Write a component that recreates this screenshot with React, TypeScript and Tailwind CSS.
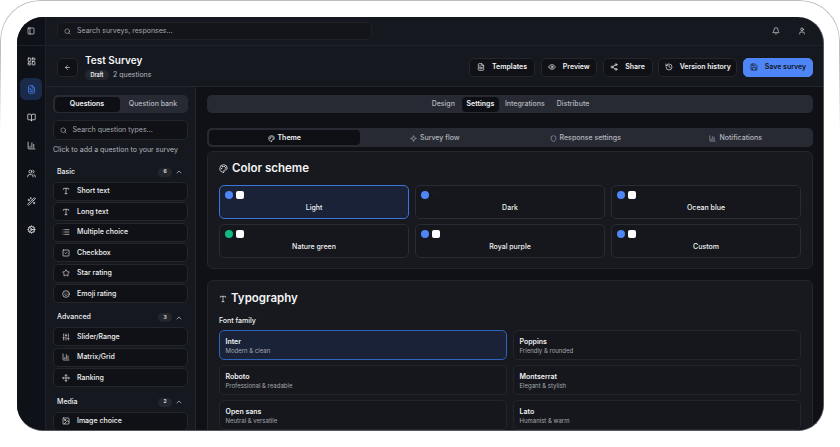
import React from "react";
import {
  PanelLeft, LayoutDashboard, FileText, BookOpen, BarChart3, Users, WandSparkles, Cog, Search, Bell, User,
  ArrowLeft, Eye, Share2, History, Save, Palette, Sparkle, Shield, Type, List, SquareCheck, Star, Smile,
  SlidersVertical, Move, Image, ChevronUp,
} from "lucide-react";

type IconT = React.ComponentType<{ className?: string; strokeWidth?: number }>;

function Item({ icon: I, label }: { icon: IconT; label: string }) {
  return (
    <div className="flex h-[19px] items-center rounded-[5px] border border-[#24262d] bg-[#101116] pl-[8px]">
      <I className="h-[8px] w-[8px] shrink-0 text-[#e5e7eb]" strokeWidth={2} />
      <span className="ml-[7px] pt-[1px] text-[7px] font-medium text-[#f1f2f4]">{label}</span>
    </div>
  );
}

function Group({ name, count, items, mt }: { name: string; count: number; items: [IconT, string][]; mt: string }) {
  return (
    <div className={mt}>
      <div className="flex h-[14px] items-center pl-[4px] pr-[5px]">
        <span className="flex-1 text-[7px] font-medium text-[#eceef1]">{name}</span>
        <span className="flex h-[9px] w-[14px] items-center justify-center rounded-full bg-[#24262d] text-[5px] font-semibold text-[#e5e7eb]">{count}</span>
        <ChevronUp className="ml-[3px] h-[8px] w-[8px] text-[#d1d5db]" strokeWidth={2} />
      </div>
      <div className="mt-[2.5px] flex flex-col gap-[1.5px]">
        {items.map(([i, l]) => <Item key={l} icon={i} label={l} />)}
      </div>
    </div>
  );
}

function HeaderBtn({ icon: I, label, w, primary }: { icon: IconT; label: string; w: string; primary?: boolean }) {
  return (
    <div className={`flex h-[19px] items-center justify-center gap-[7px] rounded-[5px] border text-[7px] font-semibold ${w} ${primary ? "border-[#4f86f7] bg-[#4f86f7] text-[#10131a]" : "border-[#24262d] bg-[#101116] text-[#f1f2f4]"}`}>
      <I className="h-[8px] w-[8px]" strokeWidth={2} />
      <span className="pt-[1px]">{label}</span>
    </div>
  );
}

function NavIcon({ icon: I, active }: { icon: IconT; active?: boolean }) {
  return (
    <div className={`flex h-[22px] w-[22px] items-center justify-center rounded-[6px] ${active ? "bg-[#1a2a4a]" : ""}`}>
      <I className={`h-[9px] w-[9px] ${active ? "text-[#4f86f7]" : "text-[#e5e7eb]"}`} strokeWidth={2} />
    </div>
  );
}

function Swatch({ label, dot, square, active }: { label: string; dot: string; square: string; active?: boolean }) {
  return (
    <div className={`flex h-[33.5px] flex-col rounded-[5px] border px-[5px] pt-[5px] ${active ? "border-[#3f74d8] bg-[#1a2238]" : "border-[#2a2c33] bg-[#15171c]"}`}>
      <div className="flex items-center gap-[3px]">
        <span className={`h-[8px] w-[8px] rounded-full ${dot}`} />
        <span className={`h-[8px] w-[8px] rounded-[2px] ${square}`} />
      </div>
      <div className="mt-[3.5px] text-center text-[7px] leading-[10px] font-medium text-[#f1f2f4]">{label}</div>
    </div>
  );
}

function FontCard({ name, desc, active }: { name: string; desc: string; active?: boolean }) {
  return (
    <div className={`h-[30px] rounded-[5px] border px-[5.5px] pt-[5.5px] ${active ? "border-[#2f62bd] bg-[#1a2238]" : "border-[#24262d] bg-[#15171c]"}`}>
      <div className="text-[7px] leading-[10px] font-semibold text-[#f1f2f4]">{name}</div>
      <div className="text-[6px] leading-[8px] text-[#a4a7af]">{desc}</div>
    </div>
  );
}

export default function App() {
  return (
    <div className="relative h-[447px] w-[840px] overflow-hidden bg-white pt-[17px] pb-[16px] pl-[17px] pr-[16px] font-['Inter','Liberation_Sans',sans-serif] antialiased">
      <div className="pointer-events-none absolute inset-x-0 top-0 h-[130px] rounded-t-[40px] border border-b-0 border-[#bdbdbd] [mask-image:linear-gradient(to_bottom,black_40%,transparent)]" />
      <div className="flex h-full overflow-hidden rounded-[26px] border-r border-b border-[#55575e] bg-[#16181f]">
        <aside className="flex w-[29px] shrink-0 flex-col items-center bg-[#0f1118]">
          <div className="flex h-[29px] w-full items-center justify-center border-r border-b border-[#1f2128]">
            <PanelLeft className="h-[8px] w-[8px] text-[#e5e7eb]" strokeWidth={2} />
          </div>
          <div className="flex w-full flex-1 flex-col items-center gap-[6px] border-r border-[#1f2128] pt-[4px]">
            <NavIcon icon={LayoutDashboard} />
            <NavIcon icon={FileText} active />
            <NavIcon icon={BookOpen} />
            <NavIcon icon={BarChart3} />
            <NavIcon icon={Users} />
            <NavIcon icon={WandSparkles} />
            <NavIcon icon={Cog} />
          </div>
        </aside>
        <div className="flex min-w-0 flex-1 flex-col">
          <header className="flex h-[29px] shrink-0 items-center border-b border-[#1f2128] pl-[11px] pr-[17px]">
            <div className="flex h-[18px] w-[315px] items-center rounded-[5px] border border-[#1f2128] bg-[#13151b] pl-[6px]">
              <Search className="h-[7px] w-[7px] text-[#b4b7be]" strokeWidth={2} />
              <span className="ml-[6px] pt-[1px] text-[7px] text-[#a4a7af]">Search surveys, responses...</span>
            </div>
            <div className="ml-auto flex items-center gap-[18px]">
              <Bell className="h-[8px] w-[8px] text-[#e5e7eb]" strokeWidth={2} />
              <User className="h-[8px] w-[8px] text-[#e5e7eb]" strokeWidth={2} />
            </div>
          </header>
          <div className="flex h-[41px] shrink-0 items-center border-b border-[#24262d] pl-[11px] pr-[10px] pt-[2px]">
            <div className="flex h-[19px] w-[21px] items-center justify-center rounded-[5px] border border-[#24262d] bg-[#101116]">
              <ArrowLeft className="h-[7px] w-[7px] text-[#f1f2f4]" strokeWidth={2} />
            </div>
            <div className="ml-[7px]">
              <div className="text-[10px] leading-[13px] font-semibold text-[#f4f5f6]">Test Survey</div>
              <div className="mt-[2.5px] flex items-center gap-[4px]">
                <span className="flex h-[10px] w-[24px] items-center justify-center rounded-full bg-[#24262d] text-[5.5px] font-semibold text-[#f1f2f4]">Draft</span>
                <span className="text-[7px] text-[#b4b7be]">2 questions</span>
              </div>
            </div>
            <div className="ml-auto flex items-center gap-[5.75px]">
              <HeaderBtn icon={FileText} label="Templates" w="w-[66px]" />
              <HeaderBtn icon={Eye} label="Preview" w="w-[56px]" />
              <HeaderBtn icon={Share2} label="Share" w="w-[50px]" />
              <HeaderBtn icon={History} label="Version history" w="w-[79px]" />
              <HeaderBtn icon={Save} label="Save survey" w="w-[70px]" primary />
            </div>
          </div>
          <div className="flex min-h-0 flex-1">
            <div className="w-[150px] shrink-0 overflow-hidden border-r border-[#24262d] px-[7px] pt-[8px]">
              <div className="flex h-[18px] items-center rounded-[5px] bg-[#282a33] px-[1.5px]">
                <div className="flex h-[15px] w-[65px] items-center justify-center rounded-[4px] bg-[#0e0f14] pt-[1px] text-[7px] font-semibold text-[#f1f2f4]">Questions</div>
                <div className="flex-1 pt-[1px] text-center text-[7px] font-medium text-[#b4b7be]">Question bank</div>
              </div>
              <div className="mt-[7px] flex h-[20px] items-center rounded-[5px] border border-[#24262d] bg-[#101116] pl-[6px]">
                <Search className="h-[7px] w-[7px] text-[#b4b7be]" strokeWidth={2} />
                <span className="ml-[5.5px] pt-[1px] text-[7px] text-[#a4a7af]">Search question types...</span>
              </div>
              <div className="mt-[5px] h-[10px] text-[7px] leading-[10px] text-[#b4b7be]">Click to add a question to your survey</div>
              <Group mt="mt-[10px]" name="Basic" count={6} items={[[Type, "Short text"], [Type, "Long text"], [List, "Multiple choice"], [SquareCheck, "Checkbox"], [Star, "Star rating"], [Smile, "Emoji rating"]]} />
              <Group mt="mt-[7.5px]" name="Advanced" count={3} items={[[SlidersVertical, "Slider/Range"], [BarChart3, "Matrix/Grid"], [Move, "Ranking"]]} />
              <Group mt="mt-[8px]" name="Media" count={2} items={[[Image, "Image choice"]]} />
            </div>
            <main className="min-w-0 flex-1 overflow-hidden bg-[#101116] pl-[11px] pr-[10px] pt-[8px]">
              <div className="flex h-[18px] items-center justify-center gap-[6px] rounded-[5px] bg-[#282a33] pt-[0.5px] text-[7px] font-medium text-[#b4b7be]">
                <span className="px-[1px]">Design</span>
                <span className="flex h-[15px] w-[37px] items-center justify-center rounded-[4px] bg-[#0e0f14] font-semibold text-[#f1f2f4]">Settings</span>
                <span className="pr-[6px]">Integrations</span>
                <span>Distribute</span>
              </div>
              <div className="mt-[15px] grid h-[19px] grid-cols-4 items-center rounded-[5px] bg-[#282a33] px-[2px] text-[7px] font-medium text-[#b4b7be]">
                <div className="flex h-[15px] items-center justify-center gap-[3px] rounded-[4px] bg-[#0e0f14] pt-[1px] font-semibold text-[#f1f2f4]"><Palette className="h-[7px] w-[7px]" strokeWidth={2} />Theme</div>
                <div className="flex items-center justify-center gap-[3px] pt-[1px]"><Sparkle className="h-[7px] w-[7px]" strokeWidth={2} />Survey flow</div>
                <div className="flex items-center justify-center gap-[3px] pt-[1px]"><Shield className="h-[7px] w-[7px]" strokeWidth={2} />Response settings</div>
                <div className="flex items-center justify-center gap-[3px] pt-[1px]"><BarChart3 className="h-[7px] w-[7px]" strokeWidth={2} />Notifications</div>
              </div>
              <section className="mt-[4px] h-[118px] rounded-[6px] border border-[#24262d] bg-[#17191f] px-[11px] pt-[9px]">
                <div className="flex h-[15px] items-center gap-[4px] text-[11.5px] font-semibold text-[#f4f5f6]"><Palette className="h-[9px] w-[9px]" strokeWidth={2} />Color scheme</div>
                <div className="mt-[9px] grid grid-cols-3 gap-x-[6px] gap-y-[5.5px]">
                  <Swatch label="Light" dot="bg-[#4f86f7]" square="bg-white" active />
                  <Swatch label="Dark" dot="bg-[#4f86f7]" square="bg-[#17191f]" />
                  <Swatch label="Ocean blue" dot="bg-[#4f86f7]" square="bg-white" />
                  <Swatch label="Nature green" dot="bg-[#10b981]" square="bg-white" />
                  <Swatch label="Royal purple" dot="bg-[#4f86f7]" square="bg-white" />
                  <Swatch label="Custom" dot="bg-[#4f86f7]" square="bg-white" />
                </div>
              </section>
              <section className="mt-[11px] h-[160px] rounded-[6px] border border-[#24262d] bg-[#17191f] px-[11px] pt-[10px]">
                <div className="flex h-[15px] items-center gap-[4px] text-[11.5px] font-semibold text-[#f4f5f6]"><Type className="h-[8px] w-[8px]" strokeWidth={2} />Typography</div>
                <div className="mt-[10px] text-[7px] leading-[10px] font-medium text-[#f1f2f4]">Font family</div>
                <div className="mt-[4px] grid grid-cols-2 gap-x-[6px] gap-y-[5px]">
                  <FontCard name="Inter" desc="Modern & clean" active />
                  <FontCard name="Poppins" desc="Friendly & rounded" />
                  <FontCard name="Roboto" desc="Professional & readable" />
                  <FontCard name="Montserrat" desc="Elegant & stylish" />
                  <FontCard name="Open sans" desc="Neutral & versatile" />
                  <FontCard name="Lato" desc="Humanist & warm" />
                </div>
              </section>
            </main>
          </div>
        </div>
      </div>
    </div>
  );
}
